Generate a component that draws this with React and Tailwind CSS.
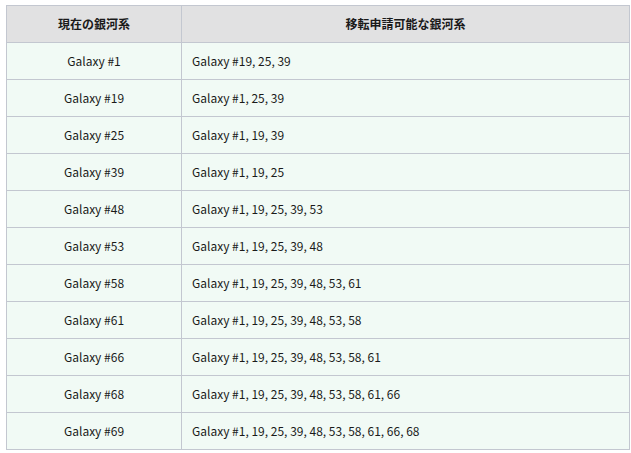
import React from "react";

const rows = [
  ["Galaxy #1", "Galaxy #19, 25, 39"],
  ["Galaxy #19", "Galaxy #1, 25, 39"],
  ["Galaxy #25", "Galaxy #1, 19, 39"],
  ["Galaxy #39", "Galaxy #1, 19, 25"],
  ["Galaxy #48", "Galaxy #1, 19, 25, 39, 53"],
  ["Galaxy #53", "Galaxy #1, 19, 25, 39, 48"],
  ["Galaxy #58", "Galaxy #1, 19, 25, 39, 48, 53, 61"],
  ["Galaxy #61", "Galaxy #1, 19, 25, 39, 48, 53, 58"],
  ["Galaxy #66", "Galaxy #1, 19, 25, 39, 48, 53, 58, 61"],
  ["Galaxy #68", "Galaxy #1, 19, 25, 39, 48, 53, 58, 61, 66"],
  ["Galaxy #69", "Galaxy #1, 19, 25, 39, 48, 53, 58, 61, 66, 68"],
];

const App = () => {
  return (
    <div
      className="w-[631px] h-[453px] bg-white pt-[5px] pl-[6px] text-[12px] text-[#1a1a1a]"
      style={{ fontFamily: '"Noto Sans CJK JP", "Noto Sans", sans-serif' }}
    >
      <table className="w-[624px] border-collapse table-fixed">
        <colgroup>
          <col className="w-[175px]" />
          <col />
        </colgroup>
        <thead>
          <tr className="h-[37px] bg-[#e1e1e2]">
            <th className="border border-[#c3c7d0] font-bold text-center p-0">現在の銀河系</th>
            <th className="border border-[#c3c7d0] font-bold text-center p-0">移転申請可能な銀河系</th>
          </tr>
        </thead>
        <tbody>
          {rows.map(([cur, list]) => (
            <tr key={cur} className="h-[37px] bg-[#f1faf5]">
              <td className="border border-[#c3c7d0] text-center p-0">{cur}</td>
              <td className="border border-[#c3c7d0] text-left pl-[10px] py-0">{list}</td>
            </tr>
          ))}
        </tbody>
      </table>
    </div>
  );
};

export default App;
